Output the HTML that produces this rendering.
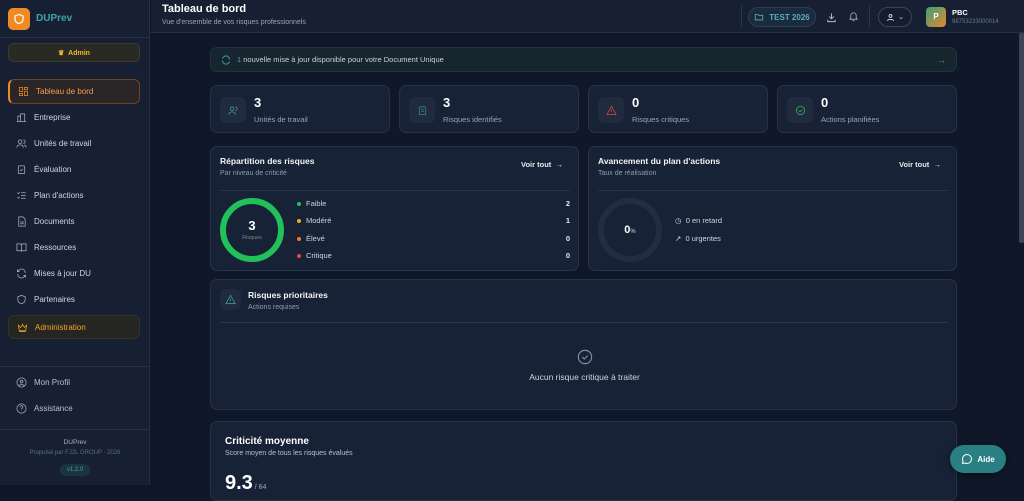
<!DOCTYPE html>
<html><head><meta charset="utf-8"><style>
*{box-sizing:border-box;margin:0;padding:0}
body{width:1024px;height:485px;overflow:hidden;background:#0f1729;font-family:"Liberation Sans",sans-serif;color:#e5e7eb;position:relative}
.a{position:absolute}
.sb{left:0;top:0;width:150px;height:485px;background:#172033;border-right:1px solid #243046}
.nav{position:absolute;left:8px;width:132px;height:24px;font-size:8px;color:#d1d5db;display:flex;align-items:center;padding-left:8px;gap:7px}
.nav svg{width:11px;height:11px;stroke:#aab3c2;fill:none;stroke-width:1.6}
.card{position:absolute;background:#182236;border:1px solid #26314a;border-radius:7px}
.ib{position:absolute;width:26px;height:26px;border-radius:6px;background:#202b3e;display:flex;align-items:center;justify-content:center}
.ib svg{width:11px;height:11px;fill:none;stroke-width:1.6}
.num{position:absolute;font-size:13px;font-weight:bold;color:#fff}
.lbl{position:absolute;font-size:7.5px;color:#9aa4b5}
.t{font-size:8.5px;font-weight:bold;color:#f3f4f6}
.s{font-size:7px;color:#8f9aab}
.leg{position:absolute;left:86px;font-size:7.5px;color:#d1d5db;display:flex;align-items:center;gap:5px}
.leg i{width:4px;height:4px;border-radius:50%;display:inline-block}
.lv{position:absolute;right:8px;font-size:7.5px;font-weight:bold;color:#e5e7eb}
</style></head><body>
<div class="a sb">
 <div class="a" style="left:8px;top:8px;width:22px;height:22px;border-radius:5px;background:#f08a24;display:flex;align-items:center;justify-content:center"><svg width="12" height="12" viewBox="0 0 24 24" fill="none" stroke="#fff" stroke-width="2.4"><path d="M12 3l8 3v6c0 5-4 8-8 9-4-1-8-4-8-9V6z"/></svg></div>
 <div class="a" style="left:36px;top:13px;font-size:10px;font-weight:bold;color:#3ea3a8">DUPrev</div>
 <div class="a" style="left:0;top:37px;width:150px;border-top:1px solid #263148"></div>
 <div class="a" style="left:8px;top:43px;width:132px;height:19px;border-radius:5px;background:#2a2a25;border:1px solid #3d3a2c;font-size:7px;font-weight:bold;color:#f5b82e;display:flex;align-items:center;justify-content:center">♛&nbsp;&nbsp;Admin</div>
 <div class="nav" style="top:79px;background:#2a2527;border:1px solid #6b4426;border-left:2px solid #f08a24;border-radius:6px;color:#f59c4c;height:25px"><svg viewBox="0 0 24 24" style="stroke:#f08a24"><rect x="3" y="3" width="7" height="9"/><rect x="14" y="3" width="7" height="5"/><rect x="14" y="12" width="7" height="9"/><rect x="3" y="16" width="7" height="5"/></svg>Tableau de bord</div>
 <div class="nav" style="top:105px"><svg viewBox="0 0 24 24"><path d="M4 21V9h6v12M10 21V4h9v17M2 21h20"/></svg>Entreprise</div>
 <div class="nav" style="top:131px"><svg viewBox="0 0 24 24"><circle cx="9" cy="8" r="4"/><path d="M2 21c0-4 3-6 7-6s7 2 7 6M16 4a4 4 0 010 8M22 21c0-3-2-5-4-6"/></svg>Unités de travail</div>
 <div class="nav" style="top:157px"><svg viewBox="0 0 24 24"><rect x="5" y="4" width="14" height="17" rx="2"/><path d="M9 13l2 2 4-4"/></svg>Évaluation</div>
 <div class="nav" style="top:183px"><svg viewBox="0 0 24 24"><path d="M3 6l2 2 3-3M3 16l2 2 3-3M11 6h10M11 12h10M11 18h10"/></svg>Plan d'actions</div>
 <div class="nav" style="top:209px"><svg viewBox="0 0 24 24"><path d="M6 2h9l5 5v15H6zM9 13h8M9 17h8"/></svg>Documents</div>
 <div class="nav" style="top:235px"><svg viewBox="0 0 24 24"><path d="M2 4h7a3 3 0 013 3v14a2 2 0 00-2-2H2zM22 4h-7a3 3 0 00-3 3v14a2 2 0 012-2h8z"/></svg>Ressources</div>
 <div class="nav" style="top:261px"><svg viewBox="0 0 24 24"><path d="M20 11A8 8 0 006 5L3 8M4 13a8 8 0 0014 6l3-3M3 3v5h5M21 21v-5h-5"/></svg>Mises à jour DU</div>
 <div class="nav" style="top:287px"><svg viewBox="0 0 24 24"><path d="M12 3l8 3v6c0 5-4 8-8 9-4-1-8-4-8-9V6z"/></svg>Partenaires</div>
 <div class="nav" style="top:315px;background:#252521;border:1px solid #353328;border-radius:6px;color:#f5a623"><svg viewBox="0 0 24 24" style="stroke:#f5a623"><path d="M3 7l5 5 4-7 4 7 5-5-2 12H5zM5 21h14"/></svg>Administration</div>
 <div class="a" style="left:0;top:366px;width:150px;border-top:1px solid #263148"></div>
 <div class="nav" style="top:370px;color:#b8c0cc"><svg viewBox="0 0 24 24"><circle cx="12" cy="12" r="10"/><circle cx="12" cy="10" r="3"/><path d="M6 19c2-3 10-3 12 0"/></svg>Mon Profil</div>
 <div class="nav" style="top:396px;color:#b8c0cc"><svg viewBox="0 0 24 24"><circle cx="12" cy="12" r="10"/><path d="M9 9a3 3 0 115 2c-1 1-2 1-2 3M12 17v.5"/></svg>Assistance</div>
 <div class="a" style="left:0;top:429px;width:150px;border-top:1px solid #263148"></div>
 <div class="a" style="left:0;top:439px;width:150px;text-align:center;font-size:6.5px;color:#aab3c2">DUPrev</div>
 <div class="a" style="left:0;top:450px;width:150px;text-align:center;font-size:6px;color:#5f6b7e">Propulsé par FJ2L GROUP · 2026</div>
 <div class="a" style="left:60px;top:464px;width:30px;height:12px;border-radius:6px;background:#1c3440;font-size:6px;color:#3ea3a8;text-align:center;line-height:12px">v1.2.0</div>
</div>
<div class="a" style="left:151px;top:0;width:873px;height:33px;background:#172033;border-bottom:1px solid #263148"></div>
<div class="a" style="left:162px;top:3px;font-size:11px;font-weight:bold;color:#fff">Tableau de bord</div>
<div class="a" style="left:162px;top:19px;font-size:7px;color:#9aa4b5">Vue d'ensemble de vos risques professionnels</div>
<div class="a" style="left:741px;top:6px;height:21px;border-left:1px solid #2c374d"></div>
<div class="a" style="left:748px;top:7px;width:68px;height:20px;border-radius:10px;background:#1a2b3d;border:1px solid #27405a;font-size:8px;font-weight:bold;color:#5fa9bd;display:flex;align-items:center;justify-content:center;gap:5px"><svg width="10" height="10" viewBox="0 0 24 24" fill="none" stroke="#5fa9bd" stroke-width="2"><path d="M3 6h6l2 2h10v11H3z"/></svg>TEST 2026</div>
<svg class="a" style="left:826px;top:12px" width="11" height="11" viewBox="0 0 24 24" fill="none" stroke="#b8c0cc" stroke-width="2"><path d="M12 3v12M7 10l5 5 5-5M4 17v4h16v-4"/></svg>
<svg class="a" style="left:848px;top:11px" width="11" height="11" viewBox="0 0 24 24" fill="none" stroke="#9aa4b5" stroke-width="2"><path d="M6 16V10a6 6 0 0112 0v6l2 2H4zM10 21h4"/></svg>
<div class="a" style="left:869px;top:6px;height:21px;border-left:1px solid #2c374d"></div>
<div class="a" style="left:878px;top:7px;width:34px;height:20px;border-radius:10px;border:1px solid #3a4558;background:#141d2e;font-size:7px;color:#ddd;display:flex;align-items:center;justify-content:center;gap:3px"><svg width="9" height="9" viewBox="0 0 24 24" fill="none" stroke="#ddd" stroke-width="2.4"><circle cx="12" cy="8" r="4"/><path d="M4 21c0-5 16-5 16 0"/></svg>⌄</div>
<div class="a" style="left:926px;top:7px;width:20px;height:20px;border-radius:4px;background:linear-gradient(135deg,#3aa17a,#e6892a);font-size:8px;font-weight:bold;color:#fff;text-align:center;line-height:20px">P</div>
<div class="a" style="left:952px;top:8px;font-size:7.5px;font-weight:bold;color:#fff">PBC</div>
<div class="a" style="left:952px;top:19px;font-size:6px;color:#6b7689">98753233000014</div>
<div class="a" style="left:1019px;top:33px;width:5px;height:210px;background:#3b4557;border-radius:2px"></div>

<div class="card" style="left:210px;top:47px;width:747px;height:25px;background:#17252f;border-color:#1f3440;display:flex;align-items:center;padding-left:10px;font-size:7.5px;color:#c8d0da"><svg width="10" height="10" viewBox="0 0 24 24" fill="none" stroke="#3ea3a8" stroke-width="2.2"><path d="M20 11A8 8 0 006 5L3 8M4 13a8 8 0 0014 6l3-3"/></svg><span style="margin-left:6px"><span style="color:#3ea3a8">1</span> nouvelle mise à jour disponible pour votre Document Unique</span><span style="position:absolute;right:10px;color:#3ea3a8;font-size:9px">→</span></div>

<div class="card" style="left:210px;top:85px;width:180px;height:48px"><div class="ib" style="left:9px;top:11px"><svg viewBox="0 0 24 24" stroke="#3ea3a8"><circle cx="9" cy="8" r="4"/><path d="M2 21c0-4 3-6 7-6s7 2 7 6M16 4a4 4 0 010 8"/></svg></div><div class="num" style="left:43px;top:9px">3</div><div class="lbl" style="left:43px;top:29px">Unités de travail</div></div>
<div class="card" style="left:399px;top:85px;width:180px;height:48px"><div class="ib" style="left:9px;top:11px"><svg viewBox="0 0 24 24" stroke="#2f8f8f"><rect x="5" y="4" width="14" height="17" rx="2"/><path d="M9 10h6M9 14h6"/></svg></div><div class="num" style="left:43px;top:9px">3</div><div class="lbl" style="left:43px;top:29px">Risques identifiés</div></div>
<div class="card" style="left:588px;top:85px;width:180px;height:48px"><div class="ib" style="left:9px;top:11px"><svg viewBox="0 0 24 24" stroke="#e04848"><path d="M12 3l10 18H2zM12 10v5M12 18v.5"/></svg></div><div class="num" style="left:43px;top:9px">0</div><div class="lbl" style="left:43px;top:29px">Risques critiques</div></div>
<div class="card" style="left:777px;top:85px;width:180px;height:48px"><div class="ib" style="left:9px;top:11px"><svg viewBox="0 0 24 24" stroke="#2fbf6a"><circle cx="12" cy="12" r="9"/><path d="M8 12l3 3 5-5"/></svg></div><div class="num" style="left:43px;top:9px">0</div><div class="lbl" style="left:43px;top:29px">Actions planifiées</div></div>

<div class="card" style="left:210px;top:146px;width:369px;height:125px">
 <div class="a t" style="left:9px;top:9px">Répartition des risques</div>
 <div class="a s" style="left:9px;top:23px">Par niveau de criticité</div>
 <div class="a" style="left:310px;top:13px;font-size:7.5px;font-weight:bold;color:#e5e7eb">Voir tout &nbsp;→</div>
 <div class="a" style="left:9px;top:43px;width:350px;border-top:1px solid #26314a"></div>
 <div class="a" style="left:9px;top:51px;width:64px;height:64px;border-radius:50%;border:6px solid #22c05a;text-align:center"><div style="font-size:13px;font-weight:bold;color:#fff;margin-top:14px">3</div><div style="font-size:5.5px;color:#7a8596;margin-top:2px">Risques</div></div>
 <div class="leg" style="top:52px"><i style="background:#22c05a"></i>Faible</div><div class="lv" style="top:52px">2</div>
 <div class="leg" style="top:69px"><i style="background:#eab308"></i>Modéré</div><div class="lv" style="top:69px">1</div>
 <div class="leg" style="top:87px"><i style="background:#f0782a"></i>Élevé</div><div class="lv" style="top:87px">0</div>
 <div class="leg" style="top:104px"><i style="background:#ef4444"></i>Critique</div><div class="lv" style="top:104px">0</div>
</div>
<div class="card" style="left:588px;top:146px;width:369px;height:125px">
 <div class="a t" style="left:9px;top:9px">Avancement du plan d'actions</div>
 <div class="a s" style="left:9px;top:23px">Taux de réalisation</div>
 <div class="a" style="left:310px;top:13px;font-size:7.5px;font-weight:bold;color:#e5e7eb">Voir tout &nbsp;→</div>
 <div class="a" style="left:9px;top:43px;width:350px;border-top:1px solid #26314a"></div>
 <div class="a" style="left:9px;top:51px;width:64px;height:64px;border-radius:50%;border:6px solid #222d40;text-align:center;line-height:52px;font-size:11px;font-weight:bold;color:#fff">0<span style="font-size:6px;color:#9aa4b5">%</span></div>
 <div class="a" style="left:86px;top:69px;font-size:7.5px;color:#d1d5db">◷ &nbsp;0 en retard</div>
 <div class="a" style="left:86px;top:87px;font-size:7.5px;color:#d1d5db">↗ &nbsp;0 urgentes</div>
</div>

<div class="card" style="left:210px;top:279px;width:747px;height:131px">
 <div class="ib" style="left:9px;top:9px;width:21px;height:21px"><svg viewBox="0 0 24 24" stroke="#3ea3a8"><path d="M12 3l10 18H2zM12 10v5M12 18v.5"/></svg></div>
 <div class="a t" style="left:37px;top:10px">Risques prioritaires</div>
 <div class="a s" style="left:37px;top:24px">Actions requises</div>
 <div class="a" style="left:9px;top:42px;width:728px;border-top:1px solid #2c374d"></div>
 <svg class="a" style="left:366px;top:69px" width="16" height="16" viewBox="0 0 24 24" fill="none" stroke="#8a94a5" stroke-width="1.6"><circle cx="12" cy="12" r="10"/><path d="M8 12l3 3 5-5"/></svg>
 <div class="a" style="left:0;top:92px;width:747px;text-align:center;font-size:8.5px;color:#d1d5db">Aucun risque critique à traiter</div>
</div>

<div class="card" style="left:210px;top:421px;width:747px;height:80px">
 <div class="a" style="left:14px;top:14px;font-size:10px;font-weight:bold;color:#fff">Criticité moyenne</div>
 <div class="a s" style="left:14px;top:28px;color:#b8c0cc">Score moyen de tous les risques évalués</div>
 <div class="a" style="left:14px;top:50px;font-size:20px;font-weight:bold;color:#fff">9.3<span style="font-size:7px;color:#7a8596"> / 64</span></div>
</div>
<div class="a" style="left:950px;top:445px;width:56px;height:28px;border-radius:14px;background:#2a7f82;box-shadow:0 2px 8px rgba(0,0,0,.4);font-size:8px;font-weight:bold;color:#fff;display:flex;align-items:center;justify-content:center;gap:4px"><svg width="12" height="12" viewBox="0 0 24 24" fill="none" stroke="#fff" stroke-width="2"><path d="M12 3a9 9 0 110 18 9 9 0 01-4-1l-5 1 1-5a9 9 0 018-13z"/></svg>Aide</div>
</body></html>
